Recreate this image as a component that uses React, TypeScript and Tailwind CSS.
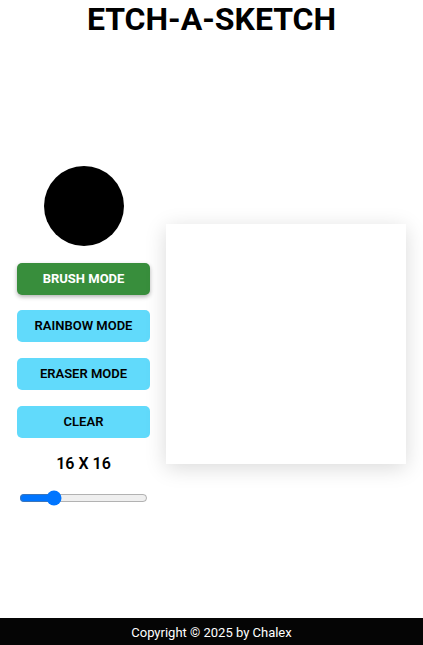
import { useState } from "react"

const buttons = ["RAINBOW MODE", "ERASER MODE", "CLEAR"]

export default function App() {
  const [size, setSize] = useState(16)

  return (
    <div className="flex min-h-screen flex-col bg-white font-['Roboto',sans-serif] text-black">
      <h1 className="text-center text-[32px] font-bold leading-[38px]">ETCH-A-SKETCH</h1>

      <main className="flex flex-1 items-center justify-center gap-4 pt-8">
        <div className="flex w-[133px] flex-col items-center gap-4 pb-4">
          <div className="mb-px h-20 w-20 rounded-full bg-black" />
          <button className="-mb-px h-8 w-full rounded-[5px] bg-[#388e3c] text-[13px] font-bold text-white shadow-[0_2px_4px_rgba(0,0,0,0.3)]">
            BRUSH MODE
          </button>
          {buttons.map((label) => (
            <button
              key={label}
              className="h-8 w-full rounded-[5px] bg-[#61dafb] text-[13px] font-semibold text-black"
            >
              {label}
            </button>
          ))}
          <p className="text-base leading-[20px] font-semibold">
            {size} X {size}
          </p>
          <input
            type="range"
            min={1}
            max={64}
            value={size}
            onChange={(e) => setSize(Number(e.target.value))}
            className="w-[129px]"
          />
        </div>

        <div className="h-60 w-60 bg-white shadow-[0_4px_20px_rgba(0,0,0,0.15)]" />
      </main>

      <footer className="flex h-[27px] items-center justify-center bg-[#050505] pt-[3px] text-[13px] text-white">
        Copyright © 2025 by Chalex
      </footer>
    </div>
  )
}
